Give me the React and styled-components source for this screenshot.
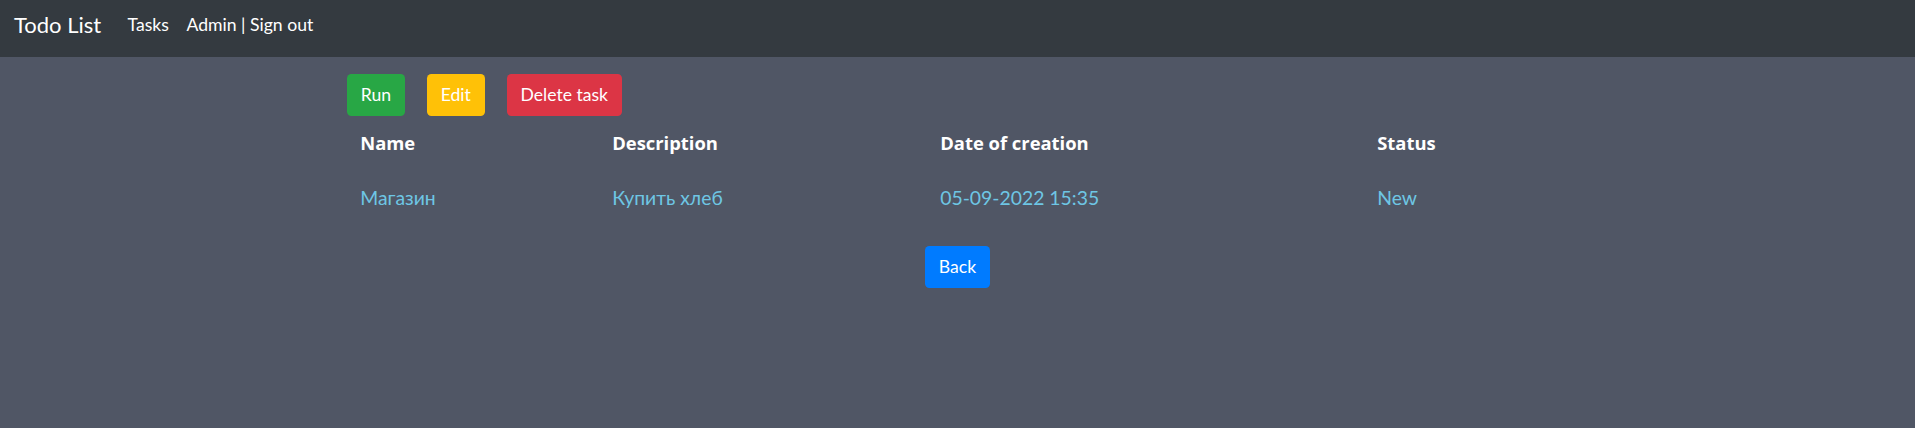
import React from "react";
import styled, { createGlobalStyle } from "styled-components";

const Global = createGlobalStyle`
  html, body { margin: 0; padding: 0; }
  body {
    background: #505665;
    font-family: Lato, "Noto Sans", sans-serif;
    font-size: 17.6px;
    line-height: 1.5;
    color: #fff;
    min-height: 428px;
  }
`;

const Navbar = styled.nav`
  height: 57px;
  background: #343a40;
  display: flex;
  align-items: flex-start;
  padding: 8px 14px 0;
  box-sizing: border-box;
`;

const Brand = styled.a`
  font-size: 22px;
  line-height: 33px;
  color: #fff;
  text-decoration: none;
  margin-right: 17.6px;
`;

const NavLink = styled.a`
  font-size: 17.6px;
  line-height: 33px;
  padding: 0 8.8px;
  color: #fff;
  text-decoration: none;
`;

const Container = styled.main`
  max-width: 1221px;
  margin: 0 auto;
  padding: 17px 0 0;
`;

const Actions = styled.div`
  display: flex;
  gap: 22px;
`;

const colors = {
  success: "#28a745",
  warning: "#ffc107",
  danger: "#dc3545",
  primary: "#007bff",
};

const Button = styled.button`
  font-family: inherit;
  font-size: 17.6px;
  line-height: 26.4px;
  padding: 7.7px 13.8px;
  border: none;
  border-radius: 4.4px;
  color: #fff;
  background: ${(p) => colors[p.$variant]};
  cursor: pointer;
`;

const Table = styled.div`
  display: grid;
  grid-template-columns: 252px 328px 437px 1fr;
  font-size: 19.36px;
  line-height: 29px;
`;

const HeadCell = styled.div`
  padding: 12.6px 13.2px 13.2px;
  font-family: "Open Sans", Lato, sans-serif;
  font-size: 18.4px;
  font-weight: 700;
  color: #fff;
`;

const Cell = styled.div`
  padding: 12.6px 13.2px 13.2px;
  color: #6ec6e4;
`;

const Center = styled.div`
  display: flex;
  justify-content: center;
  margin-top: 21px;
`;

export default function App() {
  return (
    <>
      <Global />
      <Navbar>
        <Brand href="#">Todo List</Brand>
        <NavLink href="#">Tasks</NavLink>
        <NavLink href="#">Admin | Sign out</NavLink>
      </Navbar>
      <Container>
        <Actions>
          <Button $variant="success">Run</Button>
          <Button $variant="warning">Edit</Button>
          <Button $variant="danger">Delete task</Button>
        </Actions>
        <Table>
          <HeadCell>Name</HeadCell>
          <HeadCell>Description</HeadCell>
          <HeadCell>Date of creation</HeadCell>
          <HeadCell>Status</HeadCell>
          <Cell>Магазин</Cell>
          <Cell>Купить хлеб</Cell>
          <Cell>05-09-2022 15:35</Cell>
          <Cell>New</Cell>
        </Table>
        <Center>
          <Button $variant="primary">Back</Button>
        </Center>
      </Container>
    </>
  );
}
